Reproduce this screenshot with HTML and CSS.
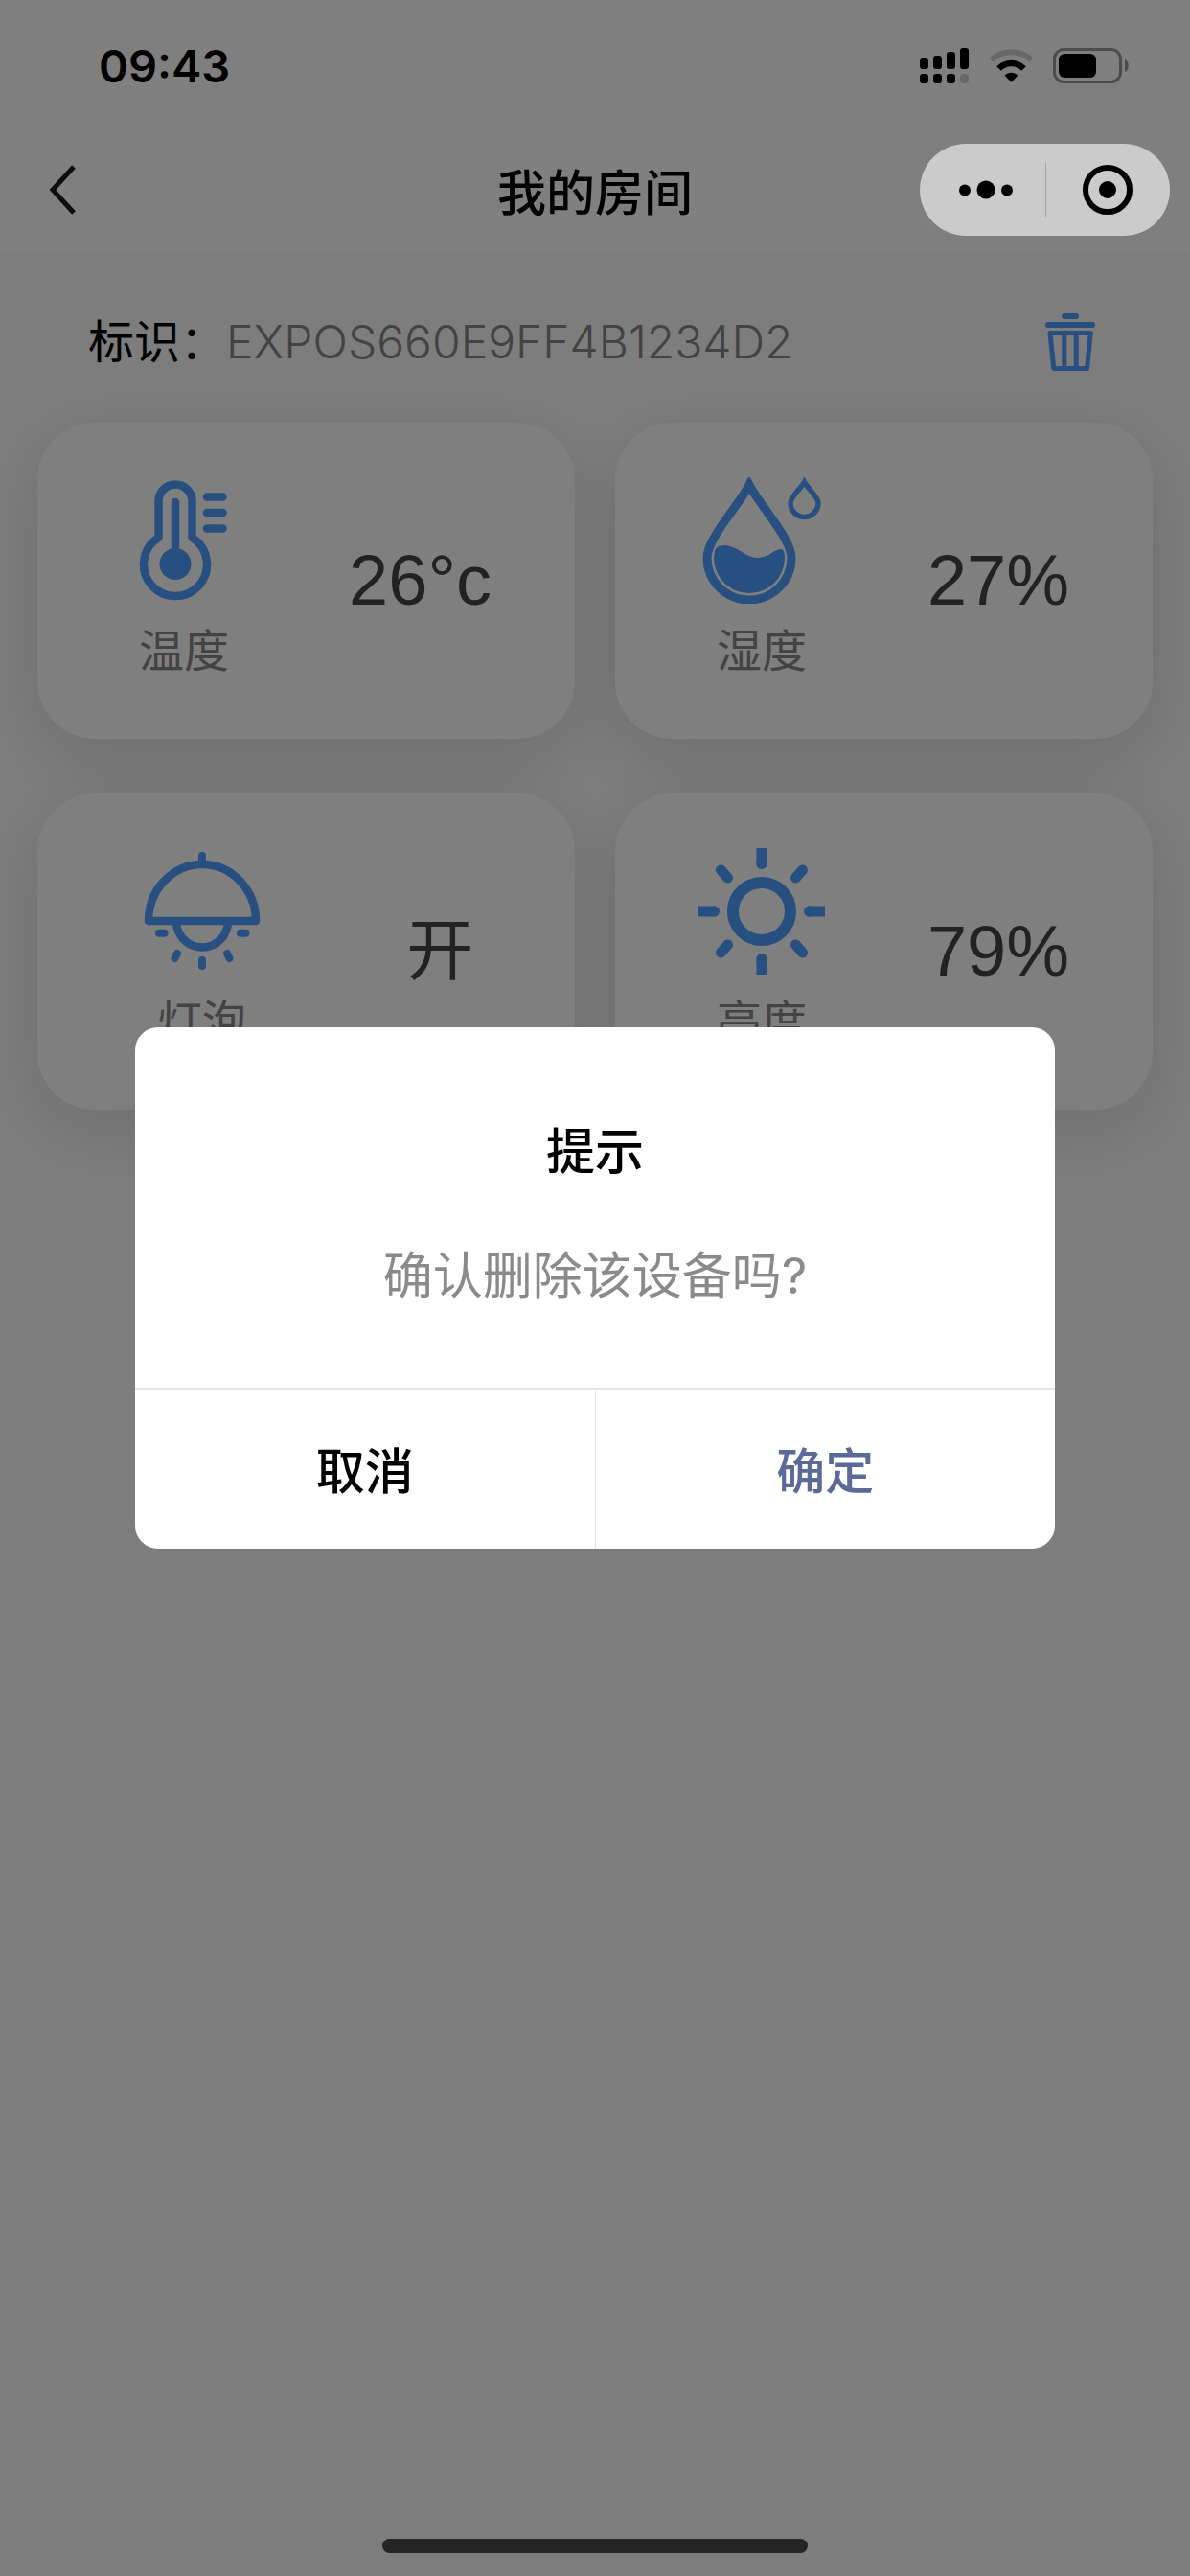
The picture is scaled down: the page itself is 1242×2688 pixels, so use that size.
FILE: index.html
```html
<!DOCTYPE html>
<html lang="zh-CN">
<head>
  <meta charset="utf-8">
  <meta name="viewport" content="width=device-width, initial-scale=1">
  <title>我的房间</title>
  <link rel="stylesheet" href="styles.css">
</head>
<body>
  <div class="status-bar">
    <time class="status-time">09:43</time>
    <div class="status-icons">
      <svg width="52" height="37" viewBox="0 0 52 37" aria-hidden="true">
        <rect x="0" y="11" width="9" height="11" rx="3"/>
        <rect x="14" y="8" width="9" height="14" rx="3"/>
        <rect x="28" y="4" width="9" height="18" rx="3"/>
        <rect x="42" y="0" width="9" height="22" rx="3"/>
        <rect x="0" y="27" width="9" height="10" rx="3"/>
        <rect x="14" y="27" width="9" height="10" rx="3"/>
        <rect x="28" y="27" width="9" height="10" rx="3"/>
        <rect x="42" y="27" width="9" height="10" rx="4" opacity=".18"/>
      </svg>
      <svg width="47" height="37" viewBox="0 0 47 37" aria-hidden="true">
        <path d="M2.500 12.500A31 31 0 0 1 44.500 12.500" fill="none" stroke="#000" stroke-width="6" opacity=".18"/>
        <path d="M10.500 21.500A18 18 0 0 1 36.500 21.500" fill="none" stroke="#000" stroke-width="6.500"/>
        <path d="M23.500 36 16.500 28.500A10.500 10.500 0 0 1 30.500 28.500Z"/>
      </svg>
      <svg width="80" height="37" viewBox="0 0 80 37" aria-hidden="true">
        <rect x="1.500" y="1.500" width="69" height="34" rx="10" fill="none" stroke="#000" stroke-width="3" opacity=".4"/>
        <rect x="6" y="6" width="39" height="25" rx="6"/>
        <path d="M75 12C80 14 80 23 75 25Z" opacity=".4"/>
      </svg>
    </div>
  </div>

  <header class="nav-bar">
    <button class="nav-back" type="button" aria-label="返回">
      <svg width="30" height="54" viewBox="0 0 30 54" aria-hidden="true">
        <path d="M27 3 5 27 27 51" fill="none" stroke="#1a1a1a" stroke-width="5"/>
      </svg>
    </button>
    <h1 class="nav-title">我的房间</h1>
    <div class="capsule">
      <button class="capsule-button" type="button" aria-label="更多">
        <svg width="58" height="20" viewBox="0 0 58 20" aria-hidden="true">
          <circle cx="7" cy="10.500" r="6"/><circle cx="29" cy="10" r="9.500"/><circle cx="51" cy="10.500" r="6"/>
        </svg>
      </button>
      <button class="capsule-button" type="button" aria-label="关闭">
        <svg width="52" height="52" viewBox="0 0 52 52" aria-hidden="true">
          <circle cx="26" cy="26" r="23" fill="none" stroke="#000" stroke-width="6"/><circle cx="26" cy="26" r="9"/>
        </svg>
      </button>
    </div>
  </header>

  <main class="room">
    <div class="device-id">
      <span>标识：</span>
      <span class="device-code">EXPOS660E9FF4B1234D2</span>
      <button class="delete" type="button" aria-label="删除">
        <svg width="66" height="66" viewBox="-3 0 66 66" aria-hidden="true">
          <rect x="21" y="3" width="18" height="6" rx="3"/>
          <rect x="4" y="12" width="52" height="6" rx="3"/>
          <path class="line" stroke-width="5" d="M9 23.500H51.300L47.500 60.500H12.800ZM23.800 23.500V60.500M36.200 23.500V60.500"/>
        </svg>
      </button>
    </div>

    <section class="cards">
      <article class="card">
        <div class="sensor">
          <svg class="sensor-icon" viewBox="0 0 132 132" aria-hidden="true">
            <path class="line" stroke-width="8.500" d="M39.500 63V25A17.500 17.500 0 0 1 74.500 25V63A33 33 0 1 1 39.500 63Z"/>
            <path class="line round" stroke-width="8.500" d="M57 26V90"/>
            <circle cx="57" cy="90.500" r="16.500"/>
            <path class="line round" stroke-width="8.500" d="M90 20.500H106.500M90 37H106.500M90 53.500H106.500"/>
          </svg>
          <span class="sensor-name">温度</span>
        </div>
        <span class="reading">26°c</span>
      </article>

      <article class="card">
        <div class="sensor">
          <svg class="sensor-icon" viewBox="0 0 132 132" aria-hidden="true">
            <path class="line miter" stroke-width="9" d="M53 8C43 28 9 64 9 84A44 44 0 0 0 97 84C97 64 63 28 53 8Z"/>
            <path d="M17 77Q19 70 29 71C42 73 50 84 62 84C74 84 78 75 86 75Q90 75 90 84A37 37 0 0 1 16 84Z"/>
            <path class="line miter" stroke-width="5.500" d="M110.500 5C106 13 96 20 96 27A14.500 14.500 0 0 0 125 27C125 20 115 13 110.500 5Z"/>
          </svg>
          <span class="sensor-name">湿度</span>
        </div>
        <span class="reading">27%</span>
      </article>

      <article class="card">
        <div class="sensor">
          <svg class="sensor-icon" viewBox="0 0 132 132" aria-hidden="true">
            <path class="line" stroke-width="8.500" d="M10 76A56 59 0 0 1 122 76Z"/>
            <path class="line" stroke-width="8.500" d="M39 76A27 27.500 0 0 0 93 76"/>
            <path class="line round" stroke-width="8" d="M66 8V15M21 88.700H26.500M106 88.700H111.500M40 110 37.500 115M92 110 94.500 115M66 117V123"/>
          </svg>
          <span class="sensor-name">灯泡</span>
        </div>
        <span class="reading reading-short">开</span>
      </article>

      <article class="card">
        <div class="sensor">
          <svg class="sensor-icon" viewBox="0 0 132 132" aria-hidden="true">
            <circle class="line" stroke-width="12" cx="66" cy="66" r="30"/>
            <path class="line" stroke-width="11" d="M66 0V18M66 132V114M0 66H18M132 66H114"/>
            <path class="line round" stroke-width="11" d="M66 14V16.500M66 118V115.500M14 66H16.500M118 66H115.500M23.500 23 30.500 31M108.500 23 101.500 31M23.500 109 30.500 101M108.500 109 101.500 101"/>
          </svg>
          <span class="sensor-name">亮度</span>
        </div>
        <span class="reading">79%</span>
      </article>
    </section>
  </main>

  <div class="overlay">
    <div class="dialog" role="dialog" aria-modal="true" aria-labelledby="dialog-title">
      <div class="dialog-body">
        <h2 class="dialog-title" id="dialog-title">提示</h2>
        <p class="dialog-text">确认删除该设备吗?</p>
      </div>
      <div class="dialog-actions">
        <button class="dialog-button" type="button">取消</button>
        <button class="dialog-button confirm" type="button">确定</button>
      </div>
    </div>
    <div class="home-indicator"></div>
  </div>
</body>
</html>
```

FILE: styles.css
```css
* {
  box-sizing: border-box;
}

body {
  margin: 0;
  min-height: 100vh;
  background: #fafafa;
  color: #000;
  font-family: Inter, "Noto Sans CJK SC", sans-serif;
}

button {
  margin: 0;
  padding: 0;
  border: 0;
  background: none;
  color: inherit;
  font: inherit;
  cursor: pointer;
}

svg {
  display: block;
}

/* Status bar */
.status-bar {
  display: flex;
  align-items: center;
  justify-content: space-between;
  height: 132px;
  padding: 4px 63px 0 103px;
  background: #fff;
}

.status-time {
  font-size: 47px;
  font-weight: 600;
}

.status-icons {
  display: flex;
  gap: 20px;
}

/* Navigation bar */
.nav-bar {
  display: grid;
  grid-template-columns: 1fr auto 1fr;
  align-items: center;
  height: 132px;
  padding: 0 21px 0 50px;
  background: #fff;
}

.nav-back {
  justify-self: start;
}

.nav-title {
  margin: 0 0 0 -29px;
  font-family: "Noto Sans CJK SC", sans-serif;
  font-size: 51px;
  font-weight: 500;
  line-height: 70px;
}

.capsule {
  position: relative;
  z-index: 20;
  display: grid;
  grid-template-columns: 1fr 1fr;
  justify-self: end;
  width: 261px;
  height: 96px;
  padding: 20px 0;
  border-radius: 48px;
  background: #cbcbcb;
}

.capsule-button {
  display: flex;
  align-items: center;
  justify-content: center;
}

.capsule-button:first-child {
  padding-left: 8px;
}

.capsule-button + .capsule-button {
  border-left: 1px solid #a3a3a3;
}

/* Device */
.device-id {
  display: flex;
  align-items: center;
  padding: 58px 92px 49px;
  font-size: 48px;
  font-weight: 400;
  line-height: 70px;
}

.device-code {
  color: #868686;
  font-weight: 300;
}

.delete {
  margin-left: auto;
}

.delete,
.sensor-icon {
  fill: #4e9eff;
  stroke: #4e9eff;
  stroke-width: 0;
}

.line {
  fill: none;
  stroke-linejoin: round;
}

.round {
  stroke-linecap: round;
}

.miter {
  stroke-linejoin: miter;
}

.cards {
  display: grid;
  grid-template-columns: 1fr 1fr;
  gap: 57px 42px;
  padding: 0 39px;
}

.card {
  display: flex;
  align-items: center;
  justify-content: space-evenly;
  height: 330px;
  border-radius: 60px;
  background: #fff;
  box-shadow: 0 20px 72px rgba(0, 0, 0, 0.12);
}

.sensor {
  display: flex;
  flex-direction: column;
  align-items: center;
  gap: 14px;
}

.sensor-icon {
  width: 132px;
  height: 132px;
}

.sensor-name {
  color: #868686;
  font-size: 47px;
  line-height: 70px;
}

.reading {
  width: 168px;
  color: #444;
  font-family: "Liberation Sans", "Noto Sans CJK SC", sans-serif;
  font-size: 74px;
  line-height: 100px;
  text-align: right;
  white-space: nowrap;
}

.reading-short {
  width: 112px;
  font-size: 70px;
}

/* Confirm dialog */
.overlay {
  position: fixed;
  inset: 0;
  z-index: 10;
  display: flex;
  align-items: center;
  justify-content: center;
  background: rgba(0, 0, 0, 0.5);
}

.dialog {
  width: 960px;
  max-width: 90%;
  overflow: hidden;
  border-radius: 24px;
  background: #fff;
  font-family: "Noto Sans CJK SC", sans-serif;
  font-size: 51px;
  line-height: 70px;
}

.dialog-body {
  display: flex;
  flex-direction: column;
  gap: 64px;
  padding: 91px 72px 81px;
  text-align: center;
}

.dialog-title,
.dialog-text {
  margin: 0;
}

.dialog-title {
  font-size: 51px;
  font-weight: 500;
}

.dialog-text {
  color: #8a8a8a;
  font-family: Inter, "Noto Sans CJK SC", sans-serif;
  font-size: 52px;
}

.dialog-actions {
  display: flex;
  height: 168px;
  border-top: 2px solid #e6e6e6;
}

.dialog-button {
  flex: 1;
  padding-bottom: 2px;
  font-weight: 500;
}

.dialog-button + .dialog-button {
  border-left: 1px solid #e6e6e6;
}

.confirm {
  color: #5b6a97;
}

.home-indicator {
  position: absolute;
  bottom: 24px;
  width: 444px;
  height: 15px;
  border-radius: 8px;
  background: #252525;
}
```
